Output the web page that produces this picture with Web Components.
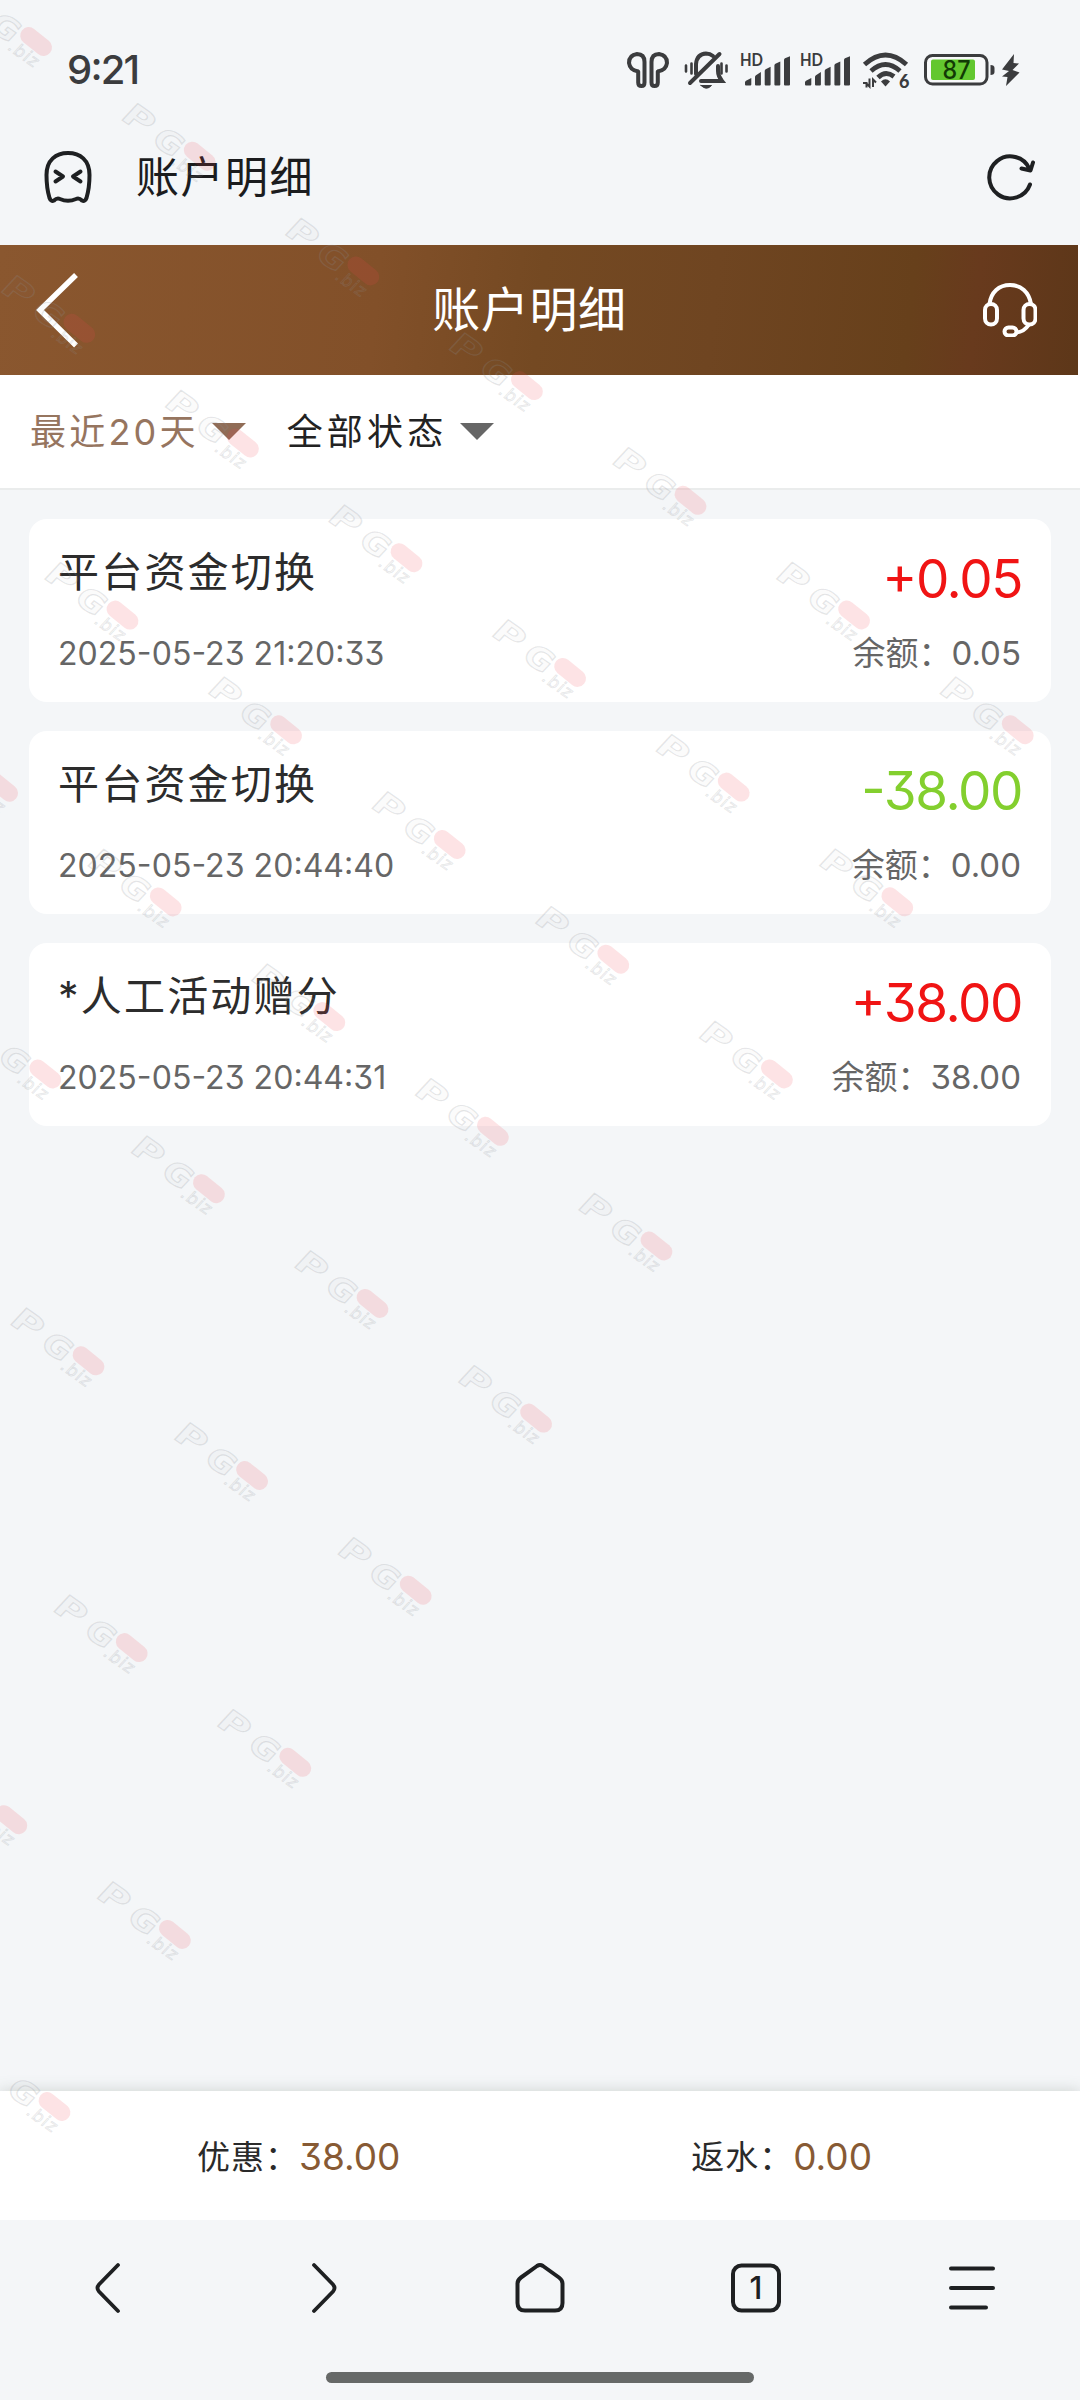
<!DOCTYPE html>
<html lang="zh-CN">
<head>
<meta charset="utf-8">
<title>账户明细</title>
<style>
html,body{margin:0;padding:0}
body{width:1080px;height:2400px;overflow:hidden;background:#f4f6f8;font-family:Inter,"Noto Sans CJK SC",sans-serif;font-feature-settings:"case","cv09"}
</style>
</head>
<body>
<app-screen>
  <status-bar time="9:21" battery="87"></status-bar>
  <browser-bar>账户明细</browser-bar>
  <page-header>账户明细</page-header>
  <filter-bar>
    <filter-item active>最近20天</filter-item>
    <filter-item>全部状态</filter-item>
  </filter-bar>
  <record-list>
    <record-card amount="+0.05" date="2025-05-23 21:20:33" balance="0.05">平台资金切换</record-card>
    <record-card amount="-38.00" date="2025-05-23 20:44:40" balance="0.00">平台资金切换</record-card>
    <record-card amount="+38.00" date="2025-05-23 20:44:31" balance="38.00">*人工活动赠分</record-card>
  </record-list>
  <summary-bar>
    <summary-item value="38.00">优惠：</summary-item>
    <summary-item value="0.00">返水：</summary-item>
  </summary-bar>
  <nav-bar tabs="1"></nav-bar>
  <water-marks></water-marks>
</app-screen>
<script>
const define = (name, render) => customElements.define(name, class extends HTMLElement {
  connectedCallback() {
    if (this.shadowRoot) return;
    this.attachShadow({ mode: 'open' }).innerHTML = render(this);
  }
});

define('app-screen', () => `
<style>:host{display:flex;flex-direction:column;position:relative;width:1080px;height:2400px;overflow:hidden;background:#f4f6f8}</style>
<slot></slot>`);

const signal = `<svg width="50" height="34" viewBox="0 0 50 34"><g fill="#3b3c3e">
<text x="0" y="13" font-family="Lato" font-weight="700" font-size="16.500" textLength="23" lengthAdjust="spacingAndGlyphs">HD</text>
<path d="M5 31.500V29.500Q5 28.500 6 27.800L11.300 25V31.500Q11.300 32.500 10.300 32.500H6Q5 32.500 5 31.500ZM15 31.500V24Q15 23 16 22.200L20.900 19V31.500Q20.900 32.500 19.900 32.500H16Q15 32.500 15 31.500ZM24.700 31.500V18Q24.700 17 25.700 16.300L30.600 13.800V31.500Q30.600 32.500 29.600 32.500H25.700Q24.700 32.500 24.700 31.500ZM34.400 31.500V12.500Q34.400 11.500 35.400 10.800L40.300 8.600V31.500Q40.300 32.500 39.300 32.500H35.400Q34.400 32.500 34.400 31.500ZM44 31.500V7Q44 6 45 5.200L50 3.200V31.500Q50 32.500 49 32.500H45Q44 32.500 44 31.500Z"/></g></svg>`;

define('status-bar', el => `
<style>
:host{display:flex;justify-content:space-between;align-items:center;height:140px;padding:0 60px 0 67px;box-sizing:border-box;color:#3b3c3e}
.time{font-size:40px;font-weight:500;line-height:48px;letter-spacing:-1.800px}
.icons{display:flex;align-items:center}
svg{display:block;overflow:visible}
</style>
<span class="time">${el.getAttribute('time')}</span>
<div class="icons">
<svg width="42" height="36" viewBox="0 0 42 36" style="margin-right:15px" fill="none" stroke="#3b3c3e" stroke-width="4" stroke-linejoin="round"><path d="M10.500 19.200Q3 18 2 11Q2 3 10 2Q17.500 2 17.500 10V30.500Q17.500 34 14.500 34Q11.200 34 11.200 30.500V19.500ZM31.500 19.200Q39 18 40 11Q40 3 32 2Q24.500 2 24.500 10V30.500Q24.500 34 27.500 34Q30.800 34 30.800 30.500V19.500Z"/></svg>
<svg width="44" height="40" viewBox="0 0 44 40" style="margin-right:12px" fill="none" stroke="#3b3c3e" stroke-width="4" stroke-linecap="round"><path d="M12 24V14Q13 4 22 3.500Q26 3.500 29 6M34 16V21Q34 26 38 31H17M35.500 4L6 33"/><path d="M2 15.500V21.500M7.500 13.500V23.500M37.500 13.500V23.500M42.500 15.500V21.500" stroke-width="2.600"/><path d="M17 35.500H27.500Q22.500 41 17 35.500Z" fill="#3b3c3e" stroke-width="1"/></svg>
<span style="margin-right:10px">${signal}</span>
<span style="margin-right:13px">${signal}</span>
<svg width="46" height="36" viewBox="0 0 46 36" style="margin-right:15px"><g fill="none" stroke="#3b3c3e" stroke-width="4.800"><path d="M1.500 12.500Q22.500-6.500 43.500 12.500"/><path d="M8 19Q22.500 6 37 19"/><path d="M15 25.500Q22.500 18 31 24.500"/></g><path d="M18 29.500Q22.500 25 27 29.500L22.500 34.500Z" fill="#3b3c3e"/><path d="M0 31H3.500V35.500M6.500 26.500V34.500L3.500 31.500M10 35V27.500L13 30.500" stroke="#3b3c3e" stroke-width="2" fill="none"/><text x="36" y="35.500" font-family="Lato" font-weight="900" font-size="18" fill="#3b3c3e">6</text></svg>
<svg width="71" height="32" viewBox="0 0 71 32" style="margin-right:6px"><rect x="1.500" y="1.500" width="61.500" height="28.500" rx="7" fill="#f8f9fa" stroke="#3b3c3e" stroke-width="3"/><rect x="7" y="5.500" width="44" height="20.500" rx="2" fill="#63c72f"/><path d="M66.500 11Q70.500 11 70.500 14V18Q70.500 21 66.500 21Z" fill="#3b3c3e"/><text x="32.500" y="25" text-anchor="middle" font-family="Inter" font-size="25" font-weight="500" textLength="28" lengthAdjust="spacingAndGlyphs" fill="#123a05">${el.getAttribute('battery')}</text></svg>
<svg width="19" height="32" viewBox="0 0 19 32"><path d="M13 0L1 15.500L8 17L1 22.500L6.500 23L5 32L18.500 18.500L11.500 16L18 9.500L12.500 9Z" fill="#3b3c3e"/></svg>
</div>`);

define('browser-bar', () => `
<style>
:host{display:flex;align-items:center;height:105px;padding:0 44px 32px;box-sizing:border-box;color:#1b1c1e}
.title{flex:1;margin-left:44px;font-size:43px;line-height:60px;letter-spacing:1.500px}
svg{display:block}
</style>
<svg width="48" height="52" viewBox="0 0 48 52" fill="none" stroke="#1e2022" stroke-width="4" stroke-linecap="round" stroke-linejoin="round"><path d="M2.500 24C2.500 9 12 2 24 2S45.500 9 45.500 24C45.500 36 44 42 42.500 47Q41 51 38 49.500Q35 46.500 32 48Q24 51.500 16 48Q13 46.500 10 49.500Q7 51 5.500 47C4 42 2.500 36 2.500 24Z"/><path d="M11.500 20.500L19 25.500L11.500 30.500M36.500 20.500L29 25.500L36.500 30.500"/></svg>
<span class="title"><slot></slot></span>
<svg width="49" height="48" viewBox="0 0 49 48" fill="none" stroke="#1e2022" stroke-width="4" stroke-linecap="round" stroke-linejoin="round"><path d="M43 31.500A21 21 0 1 1 42.500 16M46 9.500L43.500 17.500L34.500 15.500"/></svg>`);

define('page-header', () => `
<style>
:host{display:flex;align-items:center;height:130px;width:1078px;padding:0 41px 0 34px;box-sizing:border-box;color:#fff;background:linear-gradient(96deg,#8a572f 0%,#825029 35%,#744922 50%,#6f4521 66%,#67401b 84%,#683a1d 90%,#5d3719 100%);box-shadow:2px 0 #fff}
.title{flex:1;text-align:center;font-size:48px;line-height:70px;letter-spacing:.600px;padding-right:4px}
svg{display:block}
</style>
<svg width="46" height="76" viewBox="0 0 46 76" fill="none" stroke="#fff" stroke-width="5.500"><path d="M42 3L6 38L42 73.500"/></svg>
<span class="title"><slot></slot></span>
<svg width="54" height="54" viewBox="0 0 54 54" fill="none" stroke="#fff" stroke-width="4"><path d="M6.500 21C8 9 16 2 27 2S46 9 48 21"/><rect x="2" y="21" width="12" height="20.500" rx="6"/><rect x="40.500" y="21" width="12" height="20.500" rx="6"/><rect x="21.500" y="44.500" width="12" height="8" rx="4"/><path d="M46 41.500Q41 49 33.500 49.500"/></svg>`);

define('filter-bar', () => `
<style>:host{display:flex;align-items:center;gap:41px;height:115px;padding:2px 30px 2px;box-sizing:border-box;background:#fff;border-bottom:2px solid #eaecec}</style>
<slot></slot>`);

define('filter-item', () => `
<style>
:host{display:flex;align-items:center;font-size:36px;line-height:52px;letter-spacing:4.200px;color:#222;--arrow:#666}
:host([active]){color:#96755f;--arrow:#906c56;letter-spacing:3.200px}
i{margin-left:13px;border:17px solid transparent;border-top-color:var(--arrow);border-bottom:0}
</style>
<slot></slot><i></i>`);

define('record-list', () => `
<style>:host{display:flex;flex-direction:column;gap:29px;flex:1;padding:29px 29px}</style>
<slot></slot>`);

define('record-card', el => {
  const amount = el.getAttribute('amount');
  return `
<style>
:host{display:flex;justify-content:space-between;height:183px;padding:23px 30px 0 29px;box-sizing:border-box;border-radius:18px;background:#fff;color:#666}
div{display:flex;flex-direction:column}
.r{align-items:flex-end}
.title{font-size:41px;line-height:60px;letter-spacing:2.200px;color:#2c2c2c;font-family:"Open Sans","Noto Sans CJK SC",sans-serif;font-feature-settings:normal;display:flex;align-items:center;height:60px}
.amount{font-size:53px;line-height:74px;letter-spacing:-1.400px;margin-right:-1px;color:${amount[0] === '-' ? '#83cf2e' : '#f01414'}}
.date{font-size:32px;line-height:44px;margin-top:30px;letter-spacing:.050px}
.bal{font-size:33px;line-height:44px;margin-top:15px}
.title{font-family:Inter,"Noto Sans CJK SC",sans-serif}
</style>
<div><span class="title"><slot></slot></span><span class="date">${el.getAttribute('date')}</span></div>
<div class="r"><span class="amount">${amount}</span><span class="bal">余额：${el.getAttribute('balance')}</span></div>`;
});

define('summary-bar', () => `
<style>:host{display:flex;justify-content:space-between;align-items:center;height:129px;padding:3px 208px 0 197px;box-sizing:border-box;background:#fff;box-shadow:0 0 14px rgba(90,105,90,.25);clip-path:inset(-20px 0 0 0)}</style>
<slot></slot>`);

define('summary-item', el => `
<style>
:host{display:flex;align-items:center;font-size:33px;line-height:48px;letter-spacing:1px;color:#2a2a2a}
b{font-weight:400;font-size:37px;letter-spacing:0;color:#875a34}
</style>
<slot></slot><b>${el.getAttribute('value')}</b>`);

define('nav-bar', el => `
<style>
:host{display:flex;flex-direction:column;align-items:center;height:180px;background:#f4f6f8}
.row{display:flex;width:100%;height:136px}
.row span{flex:1;display:flex;align-items:center;justify-content:center}
svg{display:block;overflow:visible}
.home{width:428px;height:11px;margin-top:16px;border-radius:6px;background:#666968}
</style>
<div class="row">
<span><svg width="54" height="54" viewBox="0 0 54 54" fill="none" stroke="#1e2022" stroke-width="3.800" stroke-linecap="round"><path d="M37 4L18 23.500Q15 27 18 30.500L37 50"/></svg></span>
<span><svg width="54" height="54" viewBox="0 0 54 54" fill="none" stroke="#1e2022" stroke-width="3.800" stroke-linecap="round"><path d="M17 4L36 23.500Q39 27 36 30.500L17 50"/></svg></span>
<span><svg width="54" height="54" viewBox="0 0 54 54" fill="none" stroke="#1e2022" stroke-width="4" stroke-linejoin="round"><path d="M24 5Q27 3 30 5L46 16.500Q49.500 19 49.500 22.500V42Q49.500 49.500 42 49.500H12Q4.500 49.500 4.500 42V22.500Q4.500 19 8 16.500Z"/></svg></span>
<span><svg width="54" height="54" viewBox="0 0 54 54"><rect x="4" y="4.500" width="46" height="45" rx="8.500" fill="none" stroke="#1e2022" stroke-width="4"/><text x="27" y="37.500" text-anchor="middle" font-family="Inter" font-size="31" font-weight="500" fill="#1e2022">${el.getAttribute('tabs')}</text></svg></span>
<span><svg width="54" height="54" viewBox="0 0 54 54" stroke="#1e2022" stroke-width="4" stroke-linecap="round"><path d="M6 7.500H48M6 27H48M6 46.500H41"/></svg></span>
</div>
<div class="home"></div>`);

/* Staggered brand marks: each diagonal j holds the steps i from first to last.
   Letters that would lie wholly beyond the left edge are left out. */
define('water-marks', () => {
  const rows = { '-3': [-9, -3], '-2': [-7, -2], '-1': [-5, -1], 0: [-4, 0], 1: [-2, 1], 2: [0, 2], 3: [2, 3], 4: [3, 4], 5: [5, 5] };
  let marks = '';
  for (const [j, [from, to]] of Object.entries(rows))
    for (let i = from; i <= to; i++) {
      const x = 656.5 + i * 163.6 - j * 284, y = 1246 + i * 114.7 + j * 57.4;
      const p = x > 55 ? '<text transform="translate(-88 15) skewX(-8) scale(1.35 1)" font-size="31" stroke-width="1.100">P</text>' : '';
      const g = x > 20 ? '<text transform="translate(-49 17) skewX(-8) scale(1.120 1)" font-size="31" stroke-width="1.200">G</text>' : '';
      marks += `<g transform="translate(${x.toFixed(1)} ${y.toFixed(1)}) rotate(35)">
<g fill="#8b9096" fill-opacity=".04" stroke="#8b9096" stroke-opacity=".22" font-family="DejaVu Sans" font-weight="700">${p}${g}
<text transform="translate(-20 23) skewX(-8)" font-size="17" font-weight="400" stroke-width=".8" letter-spacing="1">.biz</text></g>
<rect x="-18" y="-8.500" width="36" height="17" rx="8.500" transform="rotate(4)" fill="#f0404e" fill-opacity=".15"/></g>`;
    }
  return `<style>:host{display:block;position:absolute;inset:0;pointer-events:none}svg{display:block}</style>
<svg width="1080" height="2400" viewBox="0 0 1080 2400" aria-hidden="true">${marks}</svg>`;
});
</script>
</body>
</html>
